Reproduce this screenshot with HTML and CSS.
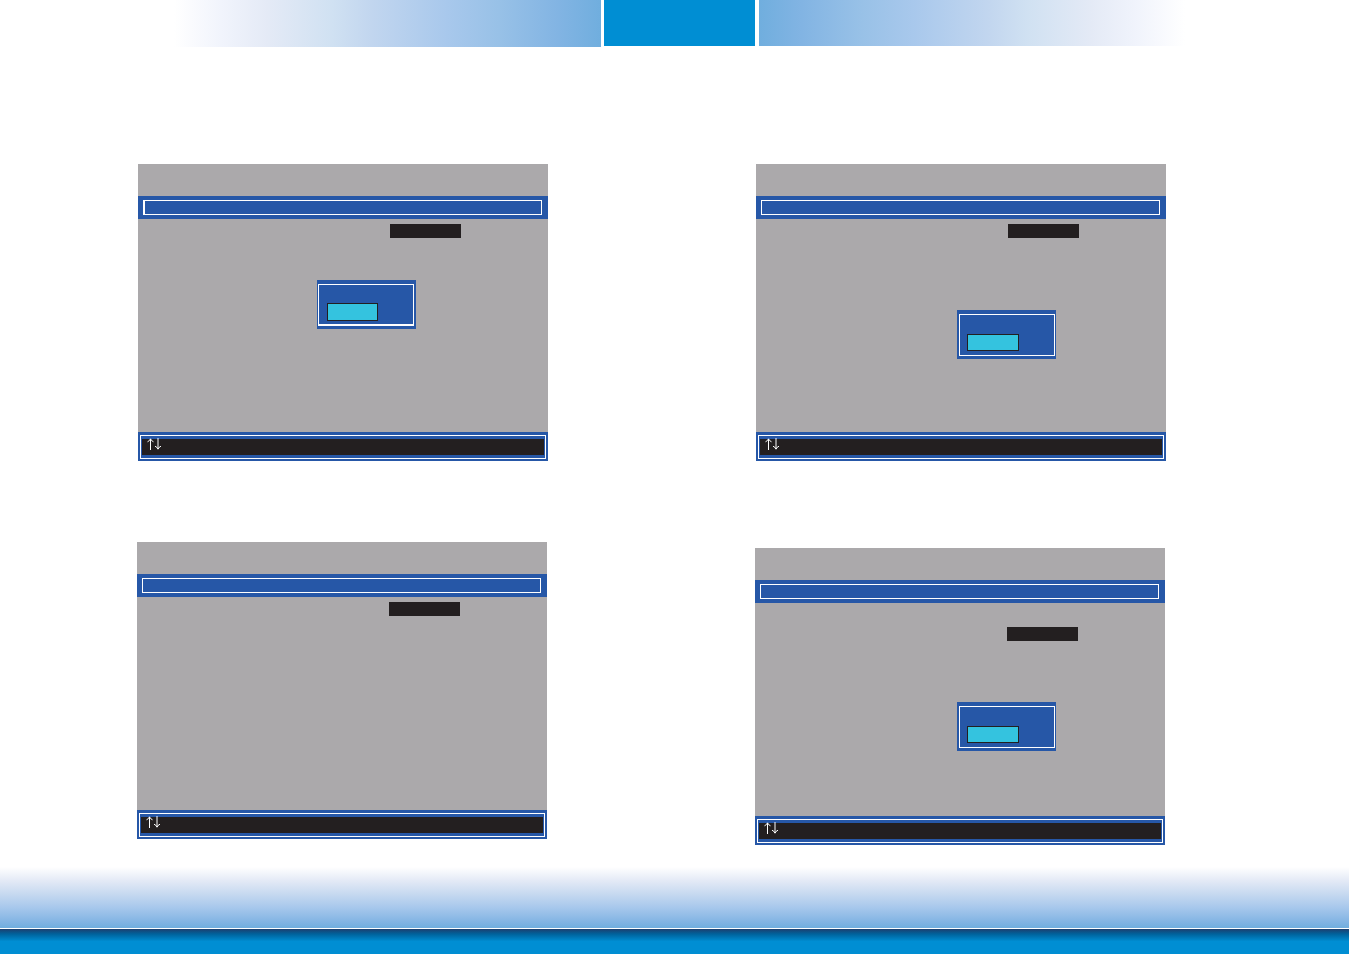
FILE: index.html
```html
<!DOCTYPE html>
<html lang="en">
<head>
    <meta charset="UTF-8">
    <meta name="viewport" content="width=device-width, initial-scale=1.0">
    <title>Setup Utility</title>
    <link rel="stylesheet" href="styles.css">
</head>
<body>
    <!-- Arrow keys icon shared by the key legends -->
    <svg class="sprite" width="0" height="0">
        <symbol id="arrows" viewBox="0 0 15 13">
            <path d="M3.5 12V1M0.5 3.8Q2.8 2.8 3.5 0.8Q4.2 2.8 6.5 3.8"/>
            <path d="M11 0V11M8 8.2Q10.3 9.2 11 11.2Q11.7 9.2 14 8.2"/>
        </symbol>
    </svg>

    <header class="banner">
        <div class="banner-fade banner-fade-left"></div>
        <div class="banner-tab"></div>
        <div class="banner-fade banner-fade-right"></div>
    </header>

    <main class="screens">
        <div class="row">
            <section class="screen">
                <div class="screen-title"></div>
                <div class="screen-menu"><div class="menu-frame menu-frame-thick"></div></div>
                <div class="screen-body">
                    <div class="selected"></div>
                    <div class="popup popup-middle">
                        <div class="popup-frame popup-frame-thick"><div class="popup-option"></div></div>
                    </div>
                </div>
                <div class="screen-keys"><div class="keys-frame"><div class="keys"><svg class="arrows"><use href="#arrows"/></svg></div></div></div>
            </section>

            <section class="screen">
                <div class="screen-title"></div>
                <div class="screen-menu"><div class="menu-frame"></div></div>
                <div class="screen-body">
                    <div class="selected"></div>
                    <div class="popup popup-right">
                        <div class="popup-frame"><div class="popup-option"></div></div>
                    </div>
                </div>
                <div class="screen-keys"><div class="keys-frame"><div class="keys"><svg class="arrows"><use href="#arrows"/></svg></div></div></div>
            </section>
        </div>

        <div class="row row-bottom">
            <section class="screen">
                <div class="screen-title"></div>
                <div class="screen-menu"><div class="menu-frame"></div></div>
                <div class="screen-body">
                    <div class="selected"></div>
                </div>
                <div class="screen-keys"><div class="keys-frame"><div class="keys"><svg class="arrows"><use href="#arrows"/></svg></div></div></div>
            </section>

            <section class="screen screen-lower">
                <div class="screen-title"></div>
                <div class="screen-menu"><div class="menu-frame"></div></div>
                <div class="screen-body screen-body-second">
                    <div class="selected"></div>
                    <div class="popup popup-right popup-low">
                        <div class="popup-frame"><div class="popup-option"></div></div>
                    </div>
                </div>
                <div class="screen-keys"><div class="keys-frame"><div class="keys"><svg class="arrows"><use href="#arrows"/></svg></div></div></div>
            </section>
        </div>
    </main>

    <footer class="footer">
        <div class="footer-fade"></div>
        <div class="footer-bar"></div>
    </footer>
</body>
</html>
```
FILE: styles.css
```css
/* Base Styles */
* {
    margin: 0;
    padding: 0;
    box-sizing: border-box;
}

body {
    display: flex;
    flex-direction: column;
    min-height: 100vh;
    margin-right: 1px;
    background: #fff;
    font-family: "Liberation Sans", sans-serif;
}

.sprite {
    position: absolute;
}

/* Top banner */
.banner {
    display: flex;
    gap: 3px;
    padding: 0 164px 0 174px;
}

.banner-fade {
    flex: 1;
    height: 46px;
}

.banner-fade-left {
    height: 47px;
    background: linear-gradient(to left, #70aede, #82b4e3 10%, #98c1e7 24%, #a8c8ec 36%, #c2d6ef 54%, #d0e1f2 63%, #e4eaf6 78%, #f1f4fc 89%, #fff);
}

.banner-fade-right {
    margin-left: 1px;
    background: linear-gradient(to right, #70aede, #82b4e3 10%, #98c1e7 24%, #a8c8ec 36%, #c2d6ef 54%, #d0e1f2 63%, #e4eaf6 78%, #f1f4fc 89%, #fff);
}

.banner-tab {
    width: 151px;
    height: 46px;
    background: #008ed3;
}

/* Screens */
.screens {
    display: flex;
    flex-direction: column;
    gap: 81px;
    padding: 117px 0 21px;
}

.row {
    display: flex;
    align-items: flex-start;
    gap: 208px;
    padding: 0 183px 0 138px;
}

.row-bottom {
    padding: 0 184px 0 137px;
}

.screen {
    flex: 1;
    background: #aba9ab;
}

.screen-lower {
    margin-top: 6px;
}

.screen-title {
    height: 32px;
}

.screen-menu {
    padding: 4px 6px 4px 5px;
    background: #2657a7;
}

.menu-frame {
    height: 15px;
    border: 1px solid #fff;
}

.menu-frame-thick {
    border-left-width: 2px;
}

.screen-body {
    position: relative;
    height: 213px;
    padding-top: 5px;
}

.screen-body-second {
    padding-top: 24px;
}

.selected {
    width: 71px;
    height: 14px;
    margin-left: 252px;
    background: #231f20;
}

/* Option popup */
.popup {
    position: absolute;
    width: 99px;
    padding: 4px 1px 3px 2px;
    background: #2657a7;
}

.popup-middle {
    top: 61px;
    left: 179px;
    padding: 4px 2px 3px 1px;
}

.popup-right {
    top: 91px;
    left: 201px;
}

.popup-low {
    top: 99px;
    left: 202px;
}

.popup-frame {
    height: 42px;
    padding: 19px 0 0 7px;
    border: 1px solid #fff;
}

.popup-frame-thick {
    padding: 18px 0 0 8px;
    border-bottom-width: 2px;
}

.popup-option {
    width: 52px;
    height: 17px;
    border: 1px solid #231f20;
    background: #34c3df;
}

.popup-frame-thick .popup-option {
    width: 51px;
    height: 18px;
}

/* Key legend */
.screen-keys {
    padding: 3px 2px 2px;
    background: #2657a7;
}

.keys-frame {
    padding: 3px 1px;
    border: 1px solid #fff;
}

.keys {
    height: 16px;
    padding-left: 5px;
    background: #231f20;
}

.arrows {
    display: block;
    width: 15px;
    height: 13px;
    margin-top: -1px;
    fill: none;
    stroke: #fff;
    stroke-width: 1;
}

.keys {
    display: flex;
    align-items: flex-start;
}

/* Footer */
.footer {
    margin-top: auto;
}

.footer-fade {
    height: 62px;
    border-bottom: 1px solid #fff;
    background: linear-gradient(#fff, #e4eaf6 22%, #c8daf0 43%, #a8c8ec 66%, #82b4e3 90%, #70aede);
}

.footer-bar {
    height: 25px;
    background: linear-gradient(#1d3f6f, #00629c 20%, #008ed3 50%);
}
```
